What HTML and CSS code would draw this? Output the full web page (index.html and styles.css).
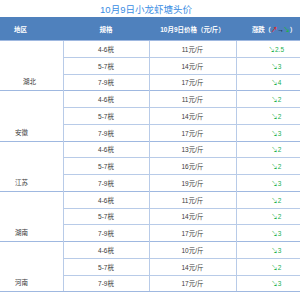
FILE: index.html
```html
<!DOCTYPE html>
<html>
<head>
<meta charset="utf-8">
<link rel="stylesheet" href="styles.css">
</head>
<body>
<div class="page">
  <div class="title">10月9日小龙虾塘头价</div>
  <table class="prices">
    <colgroup>
      <col class="c-region"><col class="c-spec"><col class="c-price"><col class="c-change">
    </colgroup>
    <thead>
      <tr>
        <th class="region-h">地区</th>
        <th>规格</th>
        <th>10月9日价格（元/斤）</th>
        <th class="chg-h">涨跌（<span class="up">↗</span><span class="flat">→</span><span class="down">↘</span>）</th>
      </tr>
    </thead>
    <tbody>
      <tr class="first"><td class="region indent" rowspan="3">湖北</td><td>4-6桄</td><td>11元/斤</td><td class="chg">↘2.5</td></tr>
      <tr><td>5-7桄</td><td>14元/斤</td><td class="chg">↘3</td></tr>
      <tr class="last"><td>7-9桄</td><td>17元/斤</td><td class="chg">↘4</td></tr>

      <tr class="first"><td class="region" rowspan="3">安徽</td><td>4-6桄</td><td>11元/斤</td><td class="chg">↘2</td></tr>
      <tr><td>5-7桄</td><td>14元/斤</td><td class="chg">↘2</td></tr>
      <tr class="last"><td>7-9桄</td><td>17元/斤</td><td class="chg">↘3</td></tr>

      <tr class="first"><td class="region" rowspan="3">江苏</td><td>4-6桄</td><td>13元/斤</td><td class="chg">↘2</td></tr>
      <tr><td>5-7桄</td><td>16元/斤</td><td class="chg">↘2</td></tr>
      <tr class="last"><td>7-9桄</td><td>19元/斤</td><td class="chg">↘3</td></tr>

      <tr class="first"><td class="region" rowspan="3">湖南</td><td>4-6桄</td><td>11元/斤</td><td class="chg">↘2</td></tr>
      <tr><td>5-7桄</td><td>14元/斤</td><td class="chg">↘2</td></tr>
      <tr class="last"><td>7-9桄</td><td>17元/斤</td><td class="chg">↘3</td></tr>

      <tr class="first"><td class="region" rowspan="3">河南</td><td>4-6桄</td><td>10元/斤</td><td class="chg">↘3</td></tr>
      <tr><td>5-7桄</td><td>14元/斤</td><td class="chg">↘2</td></tr>
      <tr class="last"><td>7-9桄</td><td>17元/斤</td><td class="chg">↘3</td></tr>
    </tbody>
  </table>
</div>
</body>
</html>
```

FILE: styles.css
```css
html, body {
  margin: 0;
  padding: 0;
  background: #ffffff;
}
body {
  width: 300px;
  height: 300px;
  overflow: hidden;
  font-family: "Liberation Sans", "Noto Sans CJK SC", sans-serif;
}
.page {
  width: 300px;
}
.title {
  width: 292px;
  height: 17px;
  line-height: 19px;
  text-align: center;
  font-size: 9.5px;
  color: #3a8de3;
}
.prices {
  width: 300px;
  border-collapse: collapse;
  table-layout: fixed;
  font-size: 6.5px;
  color: #3a3a3a;
}
.c-region { width: 63px; }
.c-spec { width: 86px; }
.c-price { width: 87px; }
.c-change { width: 64px; }
.prices th {
  background: #4f81bd;
  color: #ffffff;
  font-weight: bold;
  height: 23px;
  padding: 0;
  text-align: center;
  border: none;
  white-space: nowrap;
}
.prices th.region-h {
  text-align: left;
  padding-left: 14px;
}
.prices th.chg-h {
  padding-left: 16px;
  overflow: hidden;
  text-align: left;
  letter-spacing: -0.2px;
}
.prices td {
  height: 16.75px;
  padding: 0;
  text-align: center;
  border-top: 1px solid #b8cbe8;
  border-left: 1px solid #b8cbe8;
  box-sizing: border-box;
  white-space: nowrap;
}
.prices tr.first td {
  border-top: 1px solid #9fb8e0;
}
.prices td.region {
  border-left: none;
  text-align: left;
  vertical-align: bottom;
  padding: 0 0 4px 15px;
}
.prices td.region.indent {
  padding-left: 23px;
}
.prices tbody tr:last-child td {
  border-bottom: 1px solid #9fb8e0;
}
.prices tbody tr:nth-last-child(3) td.region {
  border-bottom: 1px solid #9fb8e0;
}
.prices td.chg {
  color: #22b14c;
  padding-left: 16px;
}
.up { color: #e0262a; }
.flat { color: #000000; }
.down { color: #22b14c; }
```
